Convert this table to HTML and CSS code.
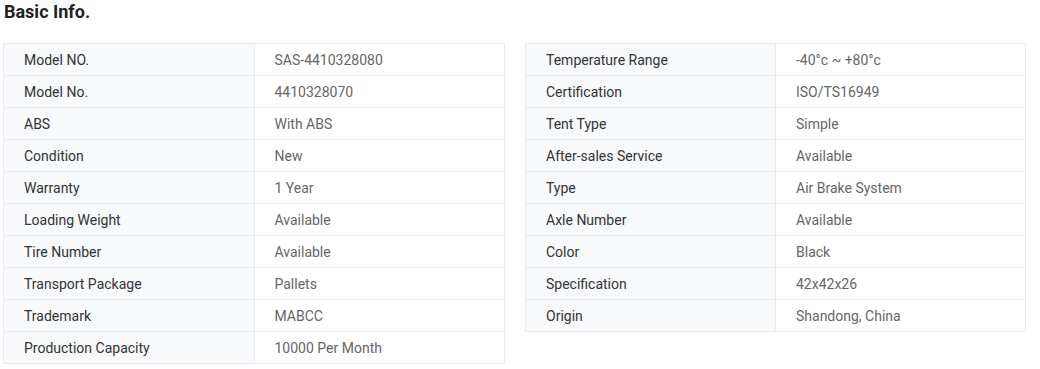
FILE: index.html
```html
<!DOCTYPE html>
<html>
<head>
<meta charset="utf-8">
<link rel="stylesheet" href="styles.css">
</head>
<body>
<div class="page">
  <h2 class="title">Basic Info.</h2>
  <div class="tables">
    <table class="info">
      <tr><td class="k">Model NO.</td><td class="v">SAS-4410328080</td></tr>
      <tr><td class="k">Model No.</td><td class="v">4410328070</td></tr>
      <tr><td class="k">ABS</td><td class="v">With ABS</td></tr>
      <tr><td class="k">Condition</td><td class="v">New</td></tr>
      <tr><td class="k">Warranty</td><td class="v">1 Year</td></tr>
      <tr><td class="k">Loading Weight</td><td class="v">Available</td></tr>
      <tr><td class="k">Tire Number</td><td class="v">Available</td></tr>
      <tr><td class="k">Transport Package</td><td class="v">Pallets</td></tr>
      <tr><td class="k">Trademark</td><td class="v">MABCC</td></tr>
      <tr><td class="k">Production Capacity</td><td class="v">10000 Per Month</td></tr>
    </table>
    <table class="info">
      <tr><td class="k">Temperature Range</td><td class="v">-40°c ~ +80°c</td></tr>
      <tr><td class="k">Certification</td><td class="v">ISO/TS16949</td></tr>
      <tr><td class="k">Tent Type</td><td class="v">Simple</td></tr>
      <tr><td class="k">After-sales Service</td><td class="v">Available</td></tr>
      <tr><td class="k">Type</td><td class="v">Air Brake System</td></tr>
      <tr><td class="k">Axle Number</td><td class="v">Available</td></tr>
      <tr><td class="k">Color</td><td class="v">Black</td></tr>
      <tr><td class="k">Specification</td><td class="v">42x42x26</td></tr>
      <tr><td class="k">Origin</td><td class="v">Shandong, China</td></tr>
    </table>
  </div>
</div>
</body>
</html>
```
FILE: styles.css
```css
html, body {
  margin: 0;
  padding: 0;
  background: #fff;
}
.page {
  padding: 0 0 0 3px;
  font-family: Roboto, "Liberation Sans", sans-serif;
}
.title {
  margin: 0;
  padding: 2px 0 0 1px;
  height: 43px;
  box-sizing: border-box;
  font-size: 18px;
  font-weight: 700;
  line-height: 20px;
  color: #222;
}
.tables {
  display: grid;
  grid-template-columns: 502px 501px;
  column-gap: 20px;
  align-items: start;
}
.info {
  width: 100%;
  border-collapse: collapse;
  table-layout: fixed;
  font-size: 14px;
}
.info td {
  height: 31px;
  padding: 0 0 0 20px;
  border: 1px solid #e8ebf0;
  line-height: 16px;
  vertical-align: middle;
}
.k {
  background: #f8f9fb;
  color: #333;
}
.v {
  background: #fff;
  color: #666;
}
```
